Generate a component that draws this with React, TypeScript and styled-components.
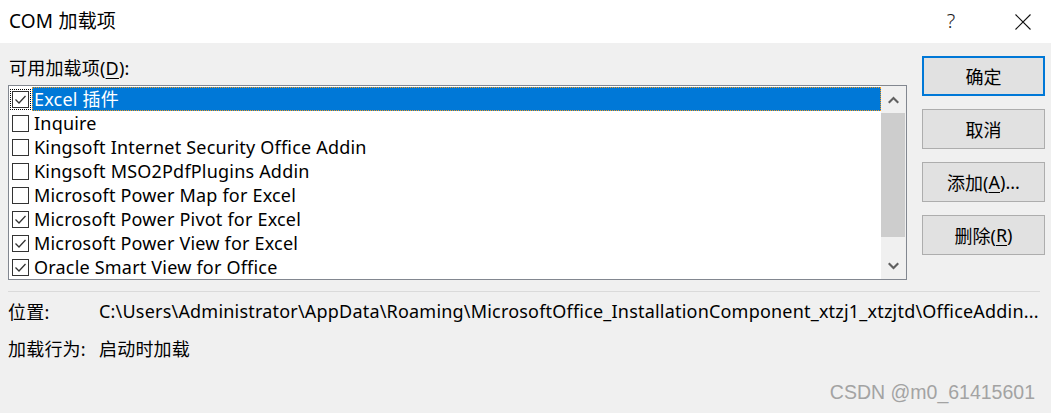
import React from "react";
import styled, { createGlobalStyle } from "styled-components";

const GlobalStyle = createGlobalStyle`
  html, body {
    margin: 0;
    padding: 0;
    background: #f0f0f0;
  }
  body {
    font-family: "Noto Sans", "Noto Sans CJK SC", sans-serif;
    color: #000;
  }
`;

const FONT = `"Noto Sans", "Noto Sans CJK SC", sans-serif`;

const Window = styled.div`
  position: relative;
  width: 1051px;
  height: 413px;
  background: #f0f0f0;
  overflow: hidden;
  font-family: ${FONT};
  font-size: 18px;
  letter-spacing: 0.2px;
`;

const TitleBar = styled.div`
  height: 43px;
  background: #fff;
  display: flex;
  align-items: center;
  padding-left: 9px;
`;

const Title = styled.div`
  flex: 1;
  font-size: 19px;
  line-height: 24px;
  padding-bottom: 2px;
`;

const TitleButton = styled.div<{ $width: number }>`
  width: ${({ $width }) => $width}px;
  height: 43px;
  display: flex;
  align-items: center;
  justify-content: center;
`;

const HelpGlyph = styled.span`
  font-size: 20px;
  font-weight: 300;
  color: #1a1a1a;
  padding-bottom: 2px;
`;

const Main = styled.div`
  display: flex;
  padding: 13px 6px 0 8px;
`;

const LeftColumn = styled.div`
  width: 899px;
  display: flex;
  flex-direction: column;
`;

const FieldLabel = styled.div`
  height: 29px;
  line-height: 24px;
  padding-left: 1px;
`;

const Key = styled.span`
  text-decoration: underline;
  text-underline-offset: 3px;
`;

const ListBox = styled.div`
  height: 195px;
  box-sizing: border-box;
  border: 1px solid #828790;
  background: #fff;
  display: flex;
`;

const Rows = styled.div`
  flex: 1;
  padding-top: 1px;
  display: flex;
  flex-direction: column;
`;

const Row = styled.div`
  height: 24px;
  display: flex;
  align-items: center;
`;

const BoxWrap = styled.div<{ $focused?: boolean }>`
  width: 21px;
  height: 21px;
  margin-left: 1px;
  box-sizing: border-box;
  border: 1px dotted ${({ $focused }) => ($focused ? "#000" : "transparent")};
  display: flex;
  align-items: center;
  justify-content: center;
`;

const Box = styled.div`
  width: 17px;
  height: 17px;
  box-sizing: border-box;
  border: 1px solid #333;
  background: #fff;
  display: flex;
  align-items: center;
  justify-content: center;
`;

const ItemText = styled.div<{ $selected?: boolean }>`
  flex: 1;
  height: 24px;
  margin-left: 1px;
  box-sizing: border-box;
  padding-left: 1px;
  line-height: 22px;
  white-space: nowrap;
  background: ${({ $selected }) => ($selected ? "#0078d7" : "transparent")};
  color: ${({ $selected }) => ($selected ? "#fff" : "#000")};
  border: 1px dotted ${({ $selected }) => ($selected ? "#f39a1e" : "transparent")};
`;

const ScrollBar = styled.div`
  width: 25px;
  background: #f0f0f0;
  display: flex;
  flex-direction: column;
`;

const ScrollArrow = styled.div`
  height: 27px;
  display: flex;
  align-items: center;
  justify-content: center;
`;

const ScrollTrack = styled.div`
  flex: 1;
`;

const Thumb = styled.div`
  width: 24px;
  height: 124px;
  background: #cdcdcd;
`;

const ButtonColumn = styled.div`
  margin-left: 15px;
  display: flex;
  flex-direction: column;
  gap: 13px;
`;

const DialogButton = styled.div<{ $primary?: boolean }>`
  width: 123px;
  height: 40px;
  box-sizing: border-box;
  background: #e1e1e1;
  border: ${({ $primary }) => ($primary ? "2px solid #0078d7" : "1px solid #adadad")};
  display: flex;
  align-items: center;
  justify-content: center;
  padding-bottom: 1px;
  letter-spacing: 0;
`;

const Separator = styled.div`
  margin: 11px 11px 0 8px;
  border-top: 1px solid #dadada;
`;

const Info = styled.div`
  padding-top: 0;
`;

const InfoRow = styled.div`
  display: flex;
  height: 37px;
  align-items: center;
  padding-left: 8px;
  white-space: nowrap;
`;

const InfoLabel = styled.div`
  width: 91px;
  flex: none;
`;

const InfoValue = styled.div`
  overflow: hidden;
  width: 945px;
`;

const Watermark = styled.div`
  position: absolute;
  right: 16px;
  bottom: 9px;
  font-family: "Liberation Sans", Arial, sans-serif;
  font-size: 19.5px;
  letter-spacing: 0;
  color: #a3a3a3;
`;

const CheckMark = () => (
  <svg width="13" height="11" viewBox="0 0 13 11">
    <polyline points="1.5,5.5 5,9 11.5,2" fill="none" stroke="#333" strokeWidth="1.3" />
  </svg>
);

const items = [
  { name: "Excel 插件", checked: true },
  { name: "Inquire", checked: false },
  { name: "Kingsoft Internet Security Office Addin", checked: false },
  { name: "Kingsoft MSO2PdfPlugins Addin", checked: false },
  { name: "Microsoft Power Map for Excel", checked: false },
  { name: "Microsoft Power Pivot for Excel", checked: true },
  { name: "Microsoft Power View for Excel", checked: true },
  { name: "Oracle Smart View for Office", checked: true },
];

export default function App() {
  return (
    <Window>
      <GlobalStyle />
      <TitleBar>
        <Title>COM 加载项</Title>
        <TitleButton $width={86}>
          <HelpGlyph>?</HelpGlyph>
        </TitleButton>
        <TitleButton $width={57}>
          <svg width="16" height="16" viewBox="0 0 16 16">
            <path d="M0.5 0.5 L15.5 15.5 M15.5 0.5 L0.5 15.5" stroke="#111" strokeWidth="1.1" />
          </svg>
        </TitleButton>
      </TitleBar>

      <Main>
        <LeftColumn>
          <FieldLabel>
            可用加载项(<Key>D</Key>):
          </FieldLabel>
          <ListBox>
            <Rows>
              {items.map((item, i) => (
                <Row key={item.name}>
                  <BoxWrap $focused={i === 0}>
                    <Box>{item.checked && <CheckMark />}</Box>
                  </BoxWrap>
                  <ItemText $selected={i === 0}>{item.name}</ItemText>
                </Row>
              ))}
            </Rows>
            <ScrollBar>
              <ScrollArrow>
                <svg width="11" height="8" viewBox="0 0 11 8">
                  <path d="M0 6 L5.5 0.5 L11 6 L9.5 7.5 L5.5 3.5 L1.5 7.5 Z" fill="#606060" />
                </svg>
              </ScrollArrow>
              <ScrollTrack>
                <Thumb />
              </ScrollTrack>
              <ScrollArrow>
                <svg width="11" height="8" viewBox="0 0 11 8">
                  <path d="M0 2 L5.5 7.5 L11 2 L9.5 0.5 L5.5 4.5 L1.5 0.5 Z" fill="#606060" />
                </svg>
              </ScrollArrow>
            </ScrollBar>
          </ListBox>
        </LeftColumn>

        <ButtonColumn>
          <DialogButton $primary>确定</DialogButton>
          <DialogButton>取消</DialogButton>
          <DialogButton>
            添加(<Key>A</Key>)...
          </DialogButton>
          <DialogButton>
            删除(<Key>R</Key>)
          </DialogButton>
        </ButtonColumn>
      </Main>

      <Separator />

      <Info>
        <InfoRow>
          <InfoLabel>位置:</InfoLabel>
          <InfoValue>
            C:\Users\Administrator\AppData\Roaming\MicrosoftOffice_InstallationComponent_xtzj1_xtzjtd\OfficeAddin...
          </InfoValue>
        </InfoRow>
        <InfoRow>
          <InfoLabel>加载行为:</InfoLabel>
          <InfoValue>启动时加载</InfoValue>
        </InfoRow>
      </Info>

      <Watermark>CSDN @m0_61415601</Watermark>
    </Window>
  );
}
